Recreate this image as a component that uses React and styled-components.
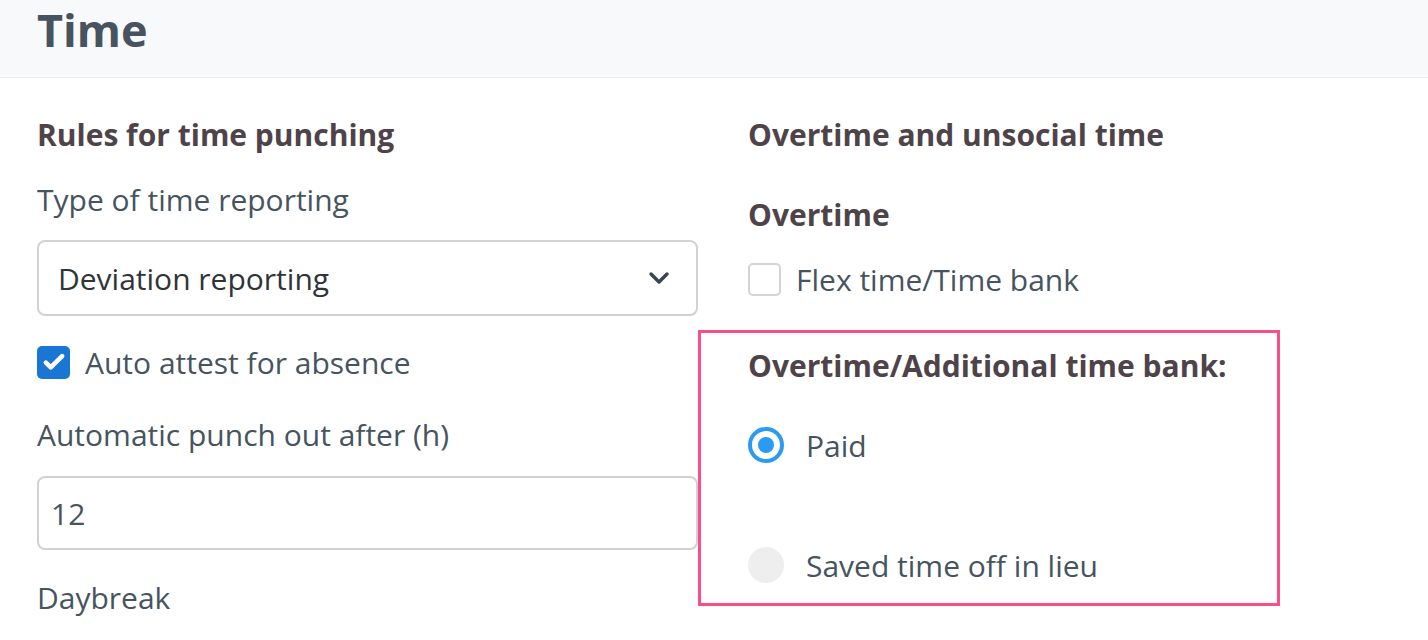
import React from "react"
import styled, { createGlobalStyle } from "styled-components"

const Global = createGlobalStyle`
  body {
    margin: 0;
    background: #ffffff;
    font-family: "Open Sans", "Noto Sans", sans-serif;
    color: #44525e;
  }
`;

const Header = styled.div`
  height: 77px;
  background: #f8f9fb;
  border-bottom: 1px solid #eceff2;
  padding-left: 37px;
  display: flex;
  align-items: center;
  overflow: hidden;
`;

const Title = styled.h1`
  margin: -18px 0 0;
  font-size: 45px;
  font-weight: 700;
  color: #47535f;
`;

const Body = styled.div`
  display: flex;
  padding: 37px 0 0 37px;
`;

const Column = styled.div`
  display: flex;
  flex-direction: column;
  width: ${p => p.$width}px;
`;

const Heading = styled.div`
  font-size: 30px;
  font-weight: 700;
  line-height: 40px;
  color: #4f434a;
  margin-top: ${p => p.$top || 0}px;
  padding-left: ${p => p.$indent || 0}px;
`;

const Label = styled.div`
  font-size: 30px;
  line-height: 40px;
  color: #46545f;
  margin-top: ${p => p.$top || 0}px;
`;

const Field = styled.div`
  box-sizing: border-box;
  height: ${p => p.$height}px;
  margin-top: ${p => p.$top}px;
  border: 2px solid #d2d2d2;
  border-radius: 8px;
  display: flex;
  align-items: center;
  justify-content: space-between;
  padding: 0 26px 0 ${p => p.$pad}px;
  font-size: 30px;
  color: ${p => p.$dark ? "#2f3438" : "#46545f"};
`;

const CheckRow = styled.div`
  display: flex;
  align-items: center;
  gap: 15px;
  height: 40px;
  margin-top: ${p => p.$top}px;
  padding-left: ${p => p.$indent || 0}px;
  font-size: 30px;
  color: #46545f;
`;

const Box = styled.div`
  box-sizing: border-box;
  width: 33px;
  height: 33px;
  border-radius: 5px;
  display: flex;
  align-items: center;
  justify-content: center;
  background: ${p => p.$checked ? "#1976d2" : "#fff"};
  border: ${p => p.$checked ? "none" : "2px solid #d4d4d4"};
`;

const Highlight = styled.div`
  margin-top: 31px;
  width: 582px;
  box-sizing: border-box;
  border: 3px solid #fb4d88;
  padding: 13px 0 18px 47px;
`;

const RadioRow = styled.div`
  display: flex;
  align-items: center;
  gap: 22px;
  height: 40px;
  margin-top: ${p => p.$top}px;
  font-size: 30px;
  color: #46545f;
`;

const Radio = styled.span`
  box-sizing: border-box;
  width: 36px;
  height: 36px;
  border-radius: 50%;
  display: flex;
  align-items: center;
  justify-content: center;
  background: ${p => p.$on ? "#fff" : "#eeeeee"};
  border: ${p => p.$on ? "4px solid #2b9af3" : "none"};

  &::after {
    content: "";
    display: ${p => p.$on ? "block" : "none"};
    width: 16px;
    height: 16px;
    border-radius: 50%;
    background: #2b9af3;
  }
`;

const Check = () => (
  <svg width="26" height="26" viewBox="0 0 24 24">
    <path d="M4.5 12.5l4.5 4.5L19.5 6.5" fill="none" stroke="#fff" strokeWidth="4.2" strokeLinecap="round" strokeLinejoin="round" />
  </svg>
);

const Chevron = () => (
  <svg width="22" height="14" viewBox="0 0 22 14">
    <path d="M3 3l8 8 8-8" fill="none" stroke="#3a444d" strokeWidth="3.4" strokeLinecap="round" strokeLinejoin="round" />
  </svg>
);

export default function App() {
  return (
    <>
      <Global />
      <Header>
        <Title>Time</Title>
      </Header>
      <Body>
        <Column $width={661}>
          <Heading>Rules for time punching</Heading>
          <Label $top={25}>Type of time reporting</Label>
          <Field $height={76} $top={20} $pad={19} $dark>
            <span>Deviation reporting</span>
            <Chevron />
          </Field>
          <CheckRow $top={26}>
            <Box $checked><Check /></Box>
            <span>Auto attest for absence</span>
          </CheckRow>
          <Label $top={33}>Automatic punch out after (h)</Label>
          <Field $height={74} $top={21} $pad={12}>
            <span>12</span>
          </Field>
          <Label $top={28}>Daybreak</Label>
        </Column>
        <Column $width={600}>
          <Heading $indent={50}>Overtime and unsocial time</Heading>
          <Heading $indent={50} $top={40}>Overtime</Heading>
          <CheckRow $top={24} $indent={50}>
            <Box />
            <span>Flex time/Time bank</span>
          </CheckRow>
          <Highlight>
            <Heading>Overtime/Additional time bank:</Heading>
            <RadioRow $top={39}>
              <Radio $on />
              <span>Paid</span>
            </RadioRow>
            <RadioRow $top={80}>
              <Radio />
              <span>Saved time off in lieu</span>
            </RadioRow>
          </Highlight>
        </Column>
      </Body>
    </>
  )
}
